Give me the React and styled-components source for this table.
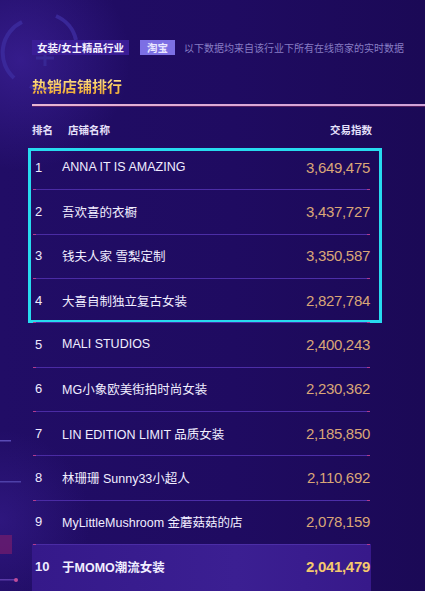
import React from "react";
import styled, { createGlobalStyle } from "styled-components";

const GlobalStyle = createGlobalStyle`
  html, body {
    margin: 0;
    padding: 0;
    background: #1e0b5e;
  }
  body {
    font-family: "Liberation Sans", "Noto Sans CJK SC", sans-serif;
    overflow: hidden;
  }
`;

const Page = styled.div`
  position: relative;
  width: 425px;
  height: 591px;
  overflow: hidden;
  box-sizing: border-box;
  padding: 40px 0 0 32px;
  background:
    radial-gradient(circle at 20px 60px, rgba(70, 40, 170, 0.55) 0, rgba(70, 40, 170, 0) 110px),
    radial-gradient(circle at 0px 520px, rgba(70, 40, 170, 0.35) 0, rgba(70, 40, 170, 0) 90px),
    linear-gradient(90deg, #210d66 0%, #1f0b61 55%, #1b0956 100%);
`;

const Decor = styled.div`
  position: absolute;
  inset: 0;
  pointer-events: none;
  z-index: 0;
`;

const Content = styled.div`
  position: relative;
  z-index: 1;
  display: flex;
  flex-direction: column;
`;

const TagRow = styled.div`
  display: flex;
  align-items: center;
  height: 15px;
`;

const Tag = styled.span`
  display: inline-flex;
  align-items: center;
  height: 15px;
  padding: 0 ${(p) => (p.$light ? "7px" : "5px")};
  margin-right: ${(p) => (p.$light ? "9px" : "11px")};
  font-size: 10.5px;
  font-weight: 700;
  color: ${(p) => (p.$light ? "#e9e6ff" : "#f4f0ff")};
  background: ${(p) => (p.$light ? "#7c6fe4" : "#3a1c96")};
  white-space: nowrap;
`;

const Note = styled.span`
  font-size: 10px;
  color: #877dc4;
  white-space: nowrap;
`;

const Title = styled.h2`
  margin: 22px 0 0;
  height: 20px;
  line-height: 20px;
  font-size: 15px;
  font-weight: 700;
  background: linear-gradient(180deg, #ffe79a 0%, #f6c24e 55%, #e99a2c 100%);
  -webkit-background-clip: text;
  background-clip: text;
  color: transparent;
  align-self: flex-start;
`;

const Rule = styled.div`
  margin-top: 7px;
  height: 2px;
  background: linear-gradient(90deg, #e8b6d2 0%, #d9a7d6 60%, #cfa2d8 100%);
  box-shadow: 0 1px 0 rgba(120, 40, 100, 0.6);
`;

const Table = styled.div`
  width: 339px;
  display: flex;
  flex-direction: column;
`;

const HeaderRow = styled.div`
  margin-top: 16px;
  height: 14px;
  display: flex;
  align-items: center;
  font-size: 10.5px;
  font-weight: 700;
  color: #e6e1fb;
`;

const HeadRank = styled.span`
  width: 36px;
`;

const HeadName = styled.span`
  flex: 1;
`;

const HeadValue = styled.span`
  margin-right: -1px;
`;

const Body = styled.div`
  margin-top: 9px;
  display: flex;
  flex-direction: column;
`;

const Group = styled.div`
  position: relative;
  display: flex;
  flex-direction: column;
`;

const Frame = styled.div`
  position: absolute;
  top: 3px;
  left: -4px;
  right: -11px;
  bottom: -1px;
  border: 3px solid #27dbef;
  pointer-events: none;
`;

const Row = styled.div`
  position: relative;
  box-sizing: border-box;
  height: ${(p) => (p.$highlight ? "52px" : "44.33px")};
  padding-bottom: ${(p) => (p.$highlight ? "7.67px" : "0")};
  display: flex;
  align-items: center;
  background: ${(p) =>
    p.$highlight
      ? "linear-gradient(90deg, #35198a 0%, #3b1f92 60%, #37198a 100%)"
      : "transparent"};

  &::before {
    content: "";
    display: ${(p) => (p.$first ? "none" : "block")};
    position: absolute;
    top: 0;
    left: 1px;
    right: 1px;
    height: 1px;
    background: linear-gradient(
      90deg,
      #b23b8f 0px,
      #b23b8f 3px,
      #4a2ba4 3px,
      #4d2fa8 calc(100% - 3px),
      #b23b8f calc(100% - 3px),
      #b23b8f 100%
    );
  }
`;

const Rank = styled.span`
  width: 30px;
  box-sizing: border-box;
  padding-left: 3px;
  font-size: 13px;
  font-weight: ${(p) => (p.$highlight ? 700 : 400)};
  color: #efeaff;
`;

const Name = styled.span`
  flex: 1;
  font-size: 12.5px;
  font-weight: ${(p) => (p.$highlight ? 700 : 400)};
  color: #f1eeff;
  white-space: nowrap;
`;

const Value = styled.span`
  margin-right: 1px;
  font-size: 15px;
  letter-spacing: -0.3px;
  font-weight: ${(p) => (p.$highlight ? 700 : 400)};
  color: ${(p) => (p.$highlight ? "#f5c96d" : "#d9a677")};
`;

const rows = [
  ["1", "ANNA IT IS AMAZING", "3,649,475"],
  ["2", "吾欢喜的衣橱", "3,437,727"],
  ["3", "钱夫人家 雪梨定制", "3,350,587"],
  ["4", "大喜自制独立复古女装", "2,827,784"],
  ["5", "MALI STUDIOS", "2,400,243"],
  ["6", "MG小象欧美街拍时尚女装", "2,230,362"],
  ["7", "LIN EDITION LIMIT 品质女装", "2,185,850"],
  ["8", "林珊珊 Sunny33小超人", "2,110,692"],
  ["9", "MyLittleMushroom 金蘑菇菇的店", "2,078,159"],
  ["10", "于MOMO潮流女装", "2,041,479"],
];

function RankRow({ rank, name, value, first, highlight }) {
  return (
    <Row $first={first} $highlight={highlight}>
      <Rank $highlight={highlight}>{rank}</Rank>
      <Name $highlight={highlight}>{name}</Name>
      <Value $highlight={highlight}>{value}</Value>
    </Row>
  );
}

function Decorations() {
  return (
    <Decor>
      <svg width="425" height="591" viewBox="0 0 425 591">
        <g fill="none" stroke="#3c2b9e" strokeWidth="4" opacity="0.85">
          <path d="M 22 22 A 34 34 0 0 0 14 78" />
          <path d="M 30 86 A 34 34 0 0 0 64 84" />
          <path d="M 56 16 A 34 34 0 0 1 76 40" />
        </g>
        <g fill="none" stroke="#3a2a98" strokeWidth="3" opacity="0.8">
          <path d="M 36 48 L 54 48 M 45 40 L 45 66 M 36 58 L 54 58" />
        </g>
        <rect x="0" y="440" width="11" height="1.5" fill="#5a4bb6" />
        <rect x="0" y="481" width="21" height="1.5" fill="#4e40a8" />
        <rect x="0" y="535" width="12" height="19" fill="#6d1c6e" opacity="0.8" />
        <rect x="0" y="579" width="15" height="1.5" fill="#5a3aa8" />
        <circle cx="16" cy="580" r="2" fill="#c04c9a" />
      </svg>
    </Decor>
  );
}

export default function App() {
  return (
    <>
      <GlobalStyle />
      <Page>
        <Decorations />
        <Content>
          <TagRow>
            <Tag>女装/女士精品行业</Tag>
            <Tag $light>淘宝</Tag>
            <Note>以下数据均来自该行业下所有在线商家的实时数据</Note>
          </TagRow>
          <Title>热销店铺排行</Title>
          <Rule />
          <Table>
            <HeaderRow>
              <HeadRank>排名</HeadRank>
              <HeadName>店铺名称</HeadName>
              <HeadValue>交易指数</HeadValue>
            </HeaderRow>
            <Body>
              <Group>
                {rows.slice(0, 4).map(([r, n, v], i) => (
                  <RankRow key={r} rank={r} name={n} value={v} first={i === 0} />
                ))}
                <Frame />
              </Group>
              {rows.slice(4).map(([r, n, v]) => (
                <RankRow
                  key={r}
                  rank={r}
                  name={n}
                  value={v}
                  highlight={r === "10"}
                />
              ))}
            </Body>
          </Table>
        </Content>
      </Page>
    </>
  );
}
